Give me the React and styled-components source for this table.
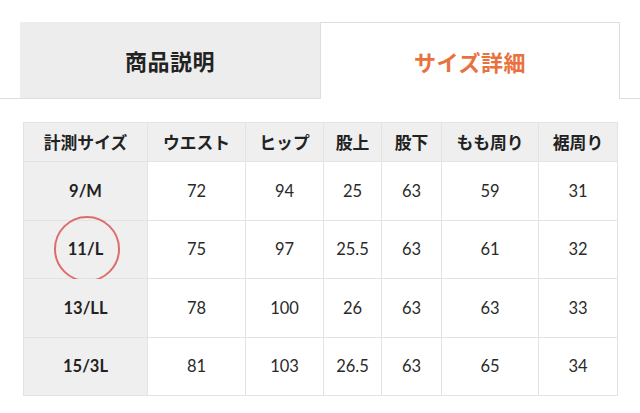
import React from "react";
import styled, { createGlobalStyle } from "styled-components";

const Global = createGlobalStyle`
  html, body { margin: 0; padding: 0; background: #fff; }
  body { font-family: Lato, "Noto Sans CJK JP", sans-serif; color: #222; }
`;

const Page = styled.div`
  width: 640px;
  height: 413px;
  padding-top: 22px;
  box-sizing: border-box;
  overflow: hidden;
`;

const TabBar = styled.div`
  display: flex;
  padding: 0 20px;
  border-bottom: 1px solid #dedede;
`;

const Tab = styled.div`
  width: 300px;
  box-sizing: border-box;
  display: flex;
  align-items: center;
  justify-content: center;
  font-family: "Noto Sans CJK JP", sans-serif;
  font-weight: 700;
  font-size: 22px;
  letter-spacing: 0.5px;
  color: ${(p) => (p.$active ? "#e8723e" : "#222")};
  background: ${(p) => (p.$active ? "#fff" : "#ededed")};
  border: ${(p) => (p.$active ? "1px solid #dedede" : "none")};
  border-bottom: none;
  margin-bottom: ${(p) => (p.$active ? "-1px" : "0")};
  height: ${(p) => (p.$active ? "77px" : "76px")};
`;

const Table = styled.table`
  margin: 23px 0 0 23px;
  width: 595px;
  border-collapse: collapse;
  table-layout: fixed;
`;

const HeadCell = styled.th`
  height: 38px;
  padding: 0;
  background: #efefef;
  border: 1px solid #e3e3e3;
  font-family: "Noto Sans CJK JP", sans-serif;
  font-weight: 700;
  font-size: 16.8px;
  color: #222;
  text-align: center;
  vertical-align: middle;
`;

const SizeCell = styled.td`
  position: relative;
  height: 57.5px;
  padding: 0;
  background: #efefef;
  border: 1px solid #e3e3e3;
  font-family: Lato, sans-serif;
  font-weight: 700;
  font-size: 16.5px;
  color: #222;
  text-align: center;
  vertical-align: middle;
`;

const ValueCell = styled.td`
  height: 57.5px;
  padding: 0;
  background: #fff;
  border: 1px solid #e3e3e3;
  font-family: Lato, sans-serif;
  font-weight: 400;
  font-size: 16.5px;
  color: #2a2a2a;
  text-align: center;
  vertical-align: middle;
`;

const Circle = styled.span`
  position: absolute;
  left: 50%;
  top: 50%;
  width: 66px;
  height: 66px;
  margin: -33px 0 0 -32px;
  border: 2px solid #e06b6b;
  border-radius: 50%;
  box-sizing: border-box;
  pointer-events: none;
`;

const widths = [124, 98, 78, 58, 60, 97, 79];
const heads = ["計測サイズ", "ウエスト", "ヒップ", "股上", "股下", "もも周り", "裾周り"];
const rows = [
  ["9/M", "72", "94", "25", "63", "59", "31"],
  ["11/L", "75", "97", "25.5", "63", "61", "32"],
  ["13/LL", "78", "100", "26", "63", "63", "33"],
  ["15/3L", "81", "103", "26.5", "63", "65", "34"],
];

export default function App() {
  return (
    <Page>
      <Global />
      <TabBar>
        <Tab>商品説明</Tab>
        <Tab $active>サイズ詳細</Tab>
      </TabBar>
      <Table>
        <colgroup>
          {widths.map((w, i) => (
            <col key={i} style={{ width: w }} />
          ))}
        </colgroup>
        <thead>
          <tr>
            {heads.map((h) => (
              <HeadCell key={h}>{h}</HeadCell>
            ))}
          </tr>
        </thead>
        <tbody>
          {rows.map((r) => (
            <tr key={r[0]}>
              <SizeCell>
                {r[0]}
                {r[0] === "11/L" && <Circle />}
              </SizeCell>
              {r.slice(1).map((v, i) => (
                <ValueCell key={i}>{v}</ValueCell>
              ))}
            </tr>
          ))}
        </tbody>
      </Table>
    </Page>
  );
}
